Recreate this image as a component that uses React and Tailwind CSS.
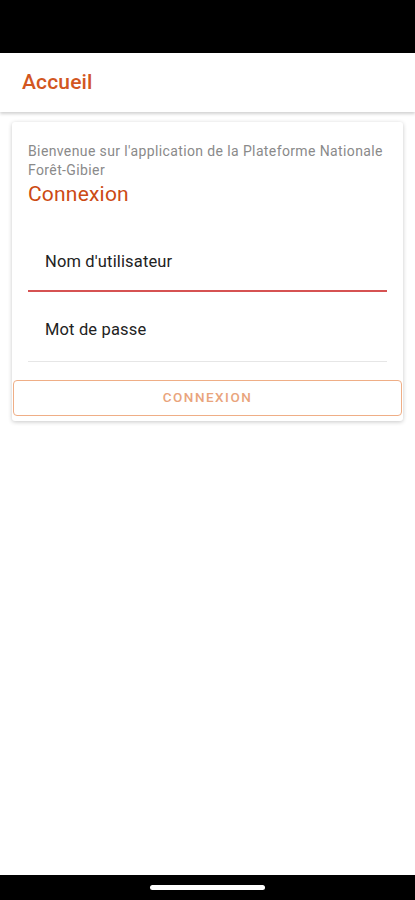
export default function App() {
  return (
    <div className="flex h-[900px] w-[415px] flex-col bg-white font-['Roboto',sans-serif]">
      <div className="h-[53px] bg-black" />

      <header className="flex h-[59px] items-center bg-white px-[22px] shadow-[0_2px_3px_rgba(0,0,0,0.18)]">
        <h1 className="text-[21px] font-medium tracking-[0.15px] text-[#d2561f]">Accueil</h1>
      </header>

      <div className="flex-1 px-3 pt-[10px]">
        <div className="rounded-[3px] bg-white pb-[5px] shadow-[0_1px_4px_rgba(0,0,0,0.22)]">
          <div className="px-4 pt-[20px]">
            <p className="text-[14px] leading-[19px] tracking-[0.38px] text-[#8a8a8a]">
              Bienvenue sur l'application de la Plateforme Nationale{" "}
              <span className="whitespace-nowrap">Forêt-Gibier</span>
            </p>
            <h2 className="mt-[2px] text-[21px] leading-[24px] tracking-[0.2px] text-[#cc4a14]">Connexion</h2>

            <div className="mt-[44px] border-b-2 border-[#d65252] pb-[15px] pl-[17px]">
              <span className="text-[16.5px] tracking-[0.15px] text-[#222]">Nom d'utilisateur</span>
            </div>
            <div className="mt-[26px] border-b border-[#e6e6e6] pb-[18px] pl-[17px]">
              <span className="text-[16.5px] tracking-[0.15px] text-[#222]">Mot de passe</span>
            </div>
          </div>

          <button
            type="button"
            className="mx-px mt-[18px] flex h-[36px] w-[calc(100%-2px)] items-center justify-center rounded-[4px] border border-[#efae86] text-[13.5px] font-medium tracking-[1.5px] text-[#e9a47c]"
          >
            CONNEXION
          </button>
        </div>
      </div>

      <div className="flex h-[25px] items-start justify-center bg-black pt-[10px]">
        <div className="h-[5px] w-[115px] rounded-full bg-white" />
      </div>
    </div>
  );
}
